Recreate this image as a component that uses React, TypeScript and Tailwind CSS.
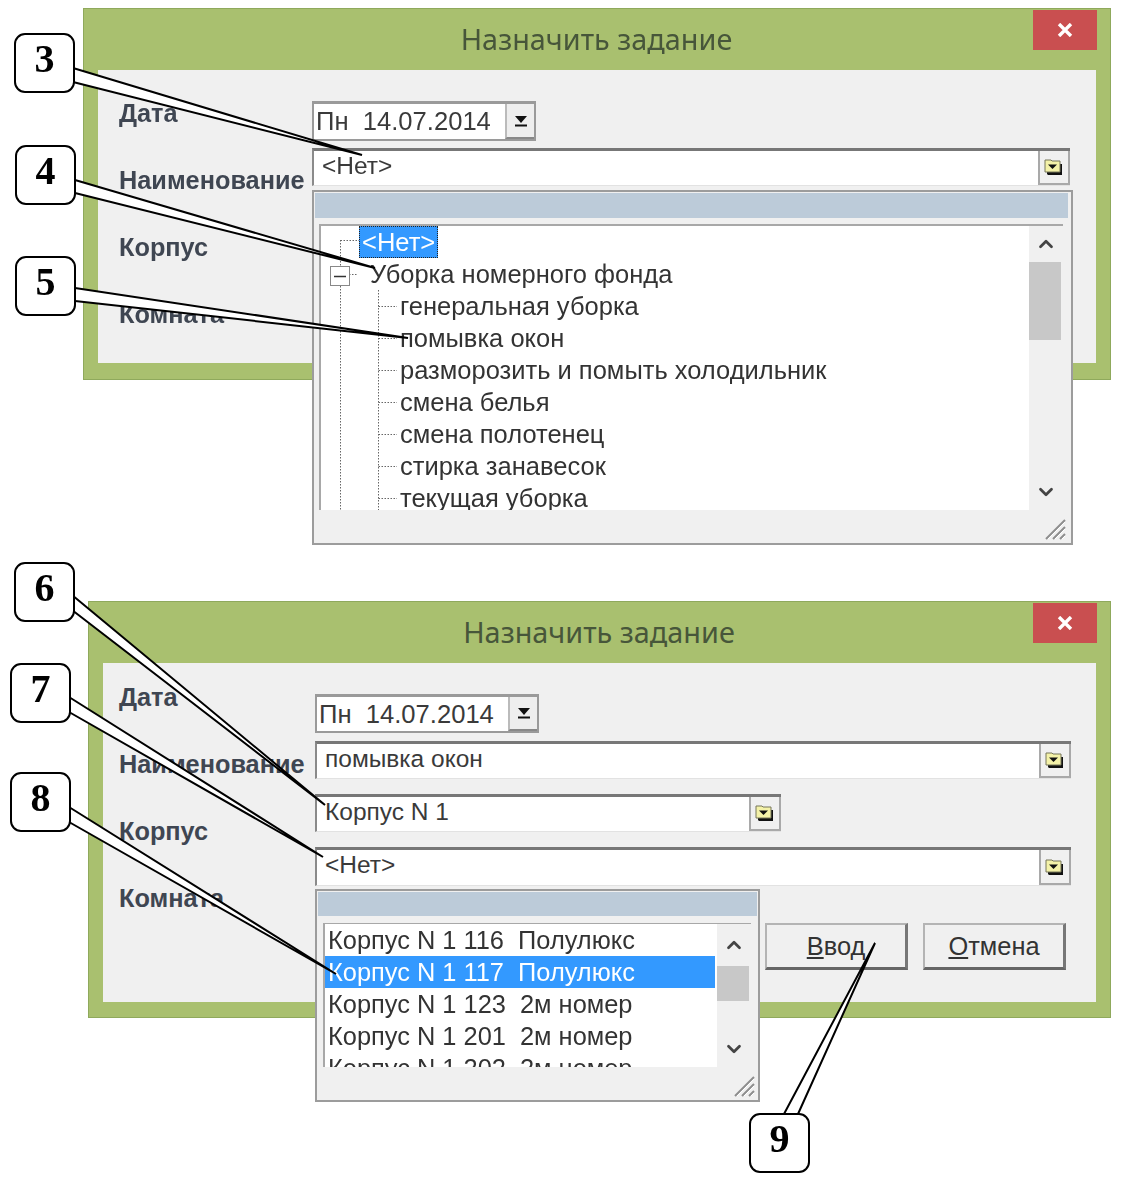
import React from "react";
import { ChevronDown, ChevronUp } from "lucide-react";

const SANS = "font-['Liberation_Sans',Arial,sans-serif]";

const treeChildren = [
  "генеральная уборка",
  "помывка окон",
  "разморозить и помыть холодильник",
  "смена белья",
  "смена полотенец",
  "стирка занавесок",
  "текущая уборка",
];

const rooms = [
  ["Корпус N 1 116", "Полулюкс"],
  ["Корпус N 1 117", "Полулюкс"],
  ["Корпус N 1 123", "2м номер"],
  ["Корпус N 1 201", "2м номер"],
  ["Корпус N 1 202", "2м номер"],
];

const callouts = [
  { n: "3", cls: "left-[14px] top-[33px]", pts: "73,68 362,155 73,82" },
  { n: "4", cls: "left-[15px] top-[145px]", pts: "75,180 375,268 75,193" },
  { n: "5", cls: "left-[15px] top-[256px]", pts: "75,288 408,338 75,301" },
  { n: "6", cls: "left-[14px] top-[562px]", pts: "72,595 325,805 72,610" },
  { n: "7", cls: "left-[10px] top-[663px]", pts: "69,697 323,857 69,712" },
  { n: "8", cls: "left-[10px] top-[772px]", pts: "69,807 336,974 69,822" },
  { n: "9", cls: "left-[749px] top-[1113px]", pts: "784,1114 875,943 798,1114" },
];

function FolderIcon() {
  return (
    <svg width="20" height="20" viewBox="0 0 20 20">
      <path d="M3 17V6h5l1 1h9v11H4z" fill="#111" />
      <path d="M1 15V3h6l1 1h8v11z" fill="#f4f2a8" stroke="#77775a" strokeWidth="1" />
      <path d="M4 7.500h9l-4.500 4.500z" fill="#111" />
    </svg>
  );
}

function Field({ text, className }: { text: string; className: string }) {
  return (
    <div className={`flex items-stretch border-t-[3px] border-l-2 border-b border-t-[#777] border-l-[#8a8a8a] border-b-[#e2e2e2] bg-white ${className}`}>
      <span className={`flex-1 pl-2 text-[24.500px] leading-[30px] text-[#3a3a3a] ${SANS}`}>{text}</span>
      <span className="flex w-[32px] items-center justify-center border-2 border-t-0 border-[#a9a9a9] bg-[#f0f0f0]">
        <FolderIcon />
      </span>
    </div>
  );
}

function DateField({ className }: { className: string }) {
  return (
    <div className={`flex w-[224px] items-stretch border-2 border-t-[3px] border-[#9a9a9a] bg-white ${className}`}>
      <span className={`flex-1 whitespace-pre pl-[2px] pt-[2px] text-[25.600px] leading-[30px] text-[#3a3a3a] ${SANS}`}>Пн  14.07.2014</span>
      <span className="flex w-[29px] items-center justify-center border-b-2 border-l-2 border-b-[#888] border-l-[#bbbbbb] bg-[#eeeeee]">
        <svg width="14" height="14" viewBox="0 0 14 14">
          <path d="M1 2h12L7 9z" fill="#111" />
          <path d="M1 11.500h12" stroke="#111" strokeWidth="2" />
        </svg>
      </span>
    </div>
  );
}

function Labels({ className }: { className: string }) {
  return (
    <div className={`flex shrink-0 flex-col gap-[37px] ${className}`}>
      {["Дата", "Наименование", "Корпус", "Комната"].map((label) => (
        <div key={label} className={`h-[30px] text-[25.300px] font-bold leading-[30px] text-[#3f4652] ${SANS}`}>
          {label}
        </div>
      ))}
    </div>
  );
}

function ScrollColumn({ upClass, thumbClass }: { upClass: string; thumbClass: string }) {
  return (
    <div className="flex w-[34px] shrink-0 flex-col bg-[#f0f0f0]">
      <div className={`flex items-center justify-center ${upClass}`}>
        <ChevronUp size={22} strokeWidth={3} color="#444" />
      </div>
      <div className={`mr-[2px] bg-[#c8c8c8] ${thumbClass}`} />
      <div className="flex flex-1 items-end justify-center pb-[7px]">
        <ChevronDown size={22} strokeWidth={3} color="#444" />
      </div>
    </div>
  );
}

function Grip() {
  return (
    <svg className="absolute bottom-[1px] right-[1px]" width="24" height="24" viewBox="0 0 24 24">
      <path d="M3 22L22 3M10 22L22 10M17 22L22 17" stroke="#8e8e8e" strokeWidth="2" />
      <path d="M5 22L22 5M12 22L22 12M19 22L22 19" stroke="#ffffff" strokeWidth="1" />
    </svg>
  );
}

function TreeLines() {
  const rows = [80, 112, 144, 176, 208, 240, 272];
  return (
    <svg className="absolute left-0 top-0" width="90" height="290" viewBox="0 0 90 290">
      <g stroke="#666" strokeWidth="1" strokeDasharray="1.500 1.500" fill="none">
        <path d="M19.500 14V40M19.500 60V290M19.500 14.500H38M28 48.500H36M57.500 64V290" />
        {rows.map((y) => (
          <path key={y} d={`M57.500 ${y + 0.5}H76`} />
        ))}
      </g>
      <rect x="9.500" y="40.500" width="19" height="19" fill="#fff" stroke="#888" />
      <path d="M13 50.500h12" stroke="#333" strokeWidth="1.500" />
    </svg>
  );
}

function TreePopup() {
  return (
    <div className="absolute left-0 top-[120px] z-10 flex h-[355px] w-[761px] flex-col border-2 border-[#9c9c9c] bg-[#f0f0f0] p-px pr-[3px]">
      <div className="h-[25px] shrink-0 bg-[#bccbd9]" />
      <div className="ml-[4px] mr-[5px] mt-[6px] flex h-[286px] shrink-0 border-l-2 border-t-2 border-[#a8a8a8] bg-white">
        <div className={`relative flex-1 overflow-hidden text-[25.500px] text-[#333] ${SANS}`}>
          <TreeLines />
          <div className="flex h-8 items-center pl-[38px]">
            <span className="border border-dotted border-[#222] bg-[#3399ff] px-[2px] leading-[30px] text-white">&lt;Нет&gt;</span>
          </div>
          <div className="flex h-8 items-center pl-[49px]">Уборка номерного фонда</div>
          {treeChildren.map((item) => (
            <div key={item} className="flex h-8 items-center pl-[79px]">{item}</div>
          ))}
        </div>
        <ScrollColumn upClass="h-[36px]" thumbClass="h-[78px]" />
      </div>
      <div className="relative flex-1">
        <Grip />
      </div>
    </div>
  );
}

function RoomPopup() {
  return (
    <div className="absolute left-0 top-[226px] z-10 flex h-[213px] w-[445px] flex-col border-2 border-[#9c9c9c] bg-[#f0f0f0] p-px">
      <div className="h-[24px] shrink-0 bg-[#bccbd9]" />
      <div className="ml-[5px] mr-[6px] mt-[7px] flex h-[144px] shrink-0 border-l-2 border-t border-[#a8a8a8] bg-white">
        <div className={`flex-1 overflow-hidden pr-[2px] text-[25.400px] text-[#333] ${SANS}`}>
          {rooms.map(([name, kind], i) => (
            <div
              key={name}
              className={i === 1 ? "flex h-8 items-center whitespace-pre bg-[#3399ff] pl-[3px] text-white" : "flex h-8 items-center whitespace-pre pl-[3px]"}
            >
              {name}  {kind}
            </div>
          ))}
        </div>
        <ScrollColumn upClass="h-[42px]" thumbClass="h-[35px]" />
      </div>
      <div className="relative flex-1">
        <Grip />
      </div>
    </div>
  );
}

function DialogButton({ first, rest }: { first: string; rest: string }) {
  return (
    <button
      type="button"
      className={`h-[47px] w-[143px] border-2 border-b-[3px] border-r-[3px] border-[#b4b4b4] border-b-[#666] border-r-[#777] bg-[#f0f0f0] text-[25.400px] text-[#333] ${SANS}`}
    >
      <span className="underline">{first}</span>
      {rest}
    </button>
  );
}

function TitleBar() {
  return (
    <>
      <span className="-mt-[2px] font-['Noto_Sans',sans-serif] text-[28.800px] text-[#47563a]">Назначить задание</span>
      <span className="absolute right-[13px] top-px flex h-[40px] w-[64px] items-center justify-center bg-[#c94f50]">
        <svg width="16" height="14" viewBox="0 0 16 14">
          <path d="M2 1l12 12M14 1L2 13" stroke="#fff" strokeWidth="3.400" />
        </svg>
      </span>
    </>
  );
}

export default function App() {
  return (
    <div className="relative h-[1180px] w-[1123px] overflow-hidden bg-white">
      <div className="pt-[8px]">
        <section className="ml-[83px] flex h-[372px] w-[1028px] flex-col border border-[#8fa95c] bg-[#a9c06f] blur-[0.4px]">
          <header className="relative flex h-[61px] shrink-0 items-center justify-center pr-[1px]">
            <TitleBar />
          </header>
          <div className="ml-[14px] flex h-[293px] w-[998px] bg-[#f0f0f0]">
            <Labels className="w-[214px] pl-[21px] pt-[28px]" />
            <div className="relative flex flex-1 flex-col gap-[7px] pt-[31px]">
              <DateField className="h-[40px]" />
              <Field text="<Нет>" className="h-[38px] w-[758px]" />
              <TreePopup />
            </div>
          </div>
        </section>

        <section className="ml-[88px] mt-[221px] flex h-[417px] w-[1023px] flex-col border border-[#8fa95c] bg-[#a9c06f] blur-[0.4px]">
          <header className="relative flex h-[61px] shrink-0 items-center justify-center pr-[1px]">
            <TitleBar />
          </header>
          <div className="ml-[14px] flex h-[339px] w-[993px] bg-[#f0f0f0]">
            <Labels className="w-[212px] pl-[16px] pt-[19px]" />
            <div className="relative flex flex-1 flex-col pt-[31px]">
              <DateField className="h-[39px]" />
              <Field text="помывка окон" className="mt-[8px] h-[38px] w-[756px]" />
              <Field text="Корпус N 1" className="mt-[15px] h-[38px] w-[466px]" />
              <Field text="<Нет>" className="mt-[15px] h-[39px] w-[756px]" />
              <div className="ml-[450px] mt-[37px] flex gap-[15px]">
                <DialogButton first="В" rest="вод" />
                <DialogButton first="О" rest="тмена" />
              </div>
              <RoomPopup />
            </div>
          </div>
        </section>
      </div>

      <svg className="absolute left-0 top-0 z-20" width="1123" height="1180" viewBox="0 0 1123 1180">
        {callouts.map((c) => (
          <polyline key={c.n} points={c.pts} fill="#fff" stroke="#000" strokeWidth="2" />
        ))}
      </svg>
      {callouts.map((c) => (
        <div
          key={c.n}
          className={`absolute z-30 flex h-[60px] w-[61px] items-center justify-center rounded-[11px] border-2 border-black bg-white pb-[8px] font-['Liberation_Serif',serif] text-[40px] font-bold text-black ${c.cls}`}
        >
          {c.n}
        </div>
      ))}
    </div>
  );
}
